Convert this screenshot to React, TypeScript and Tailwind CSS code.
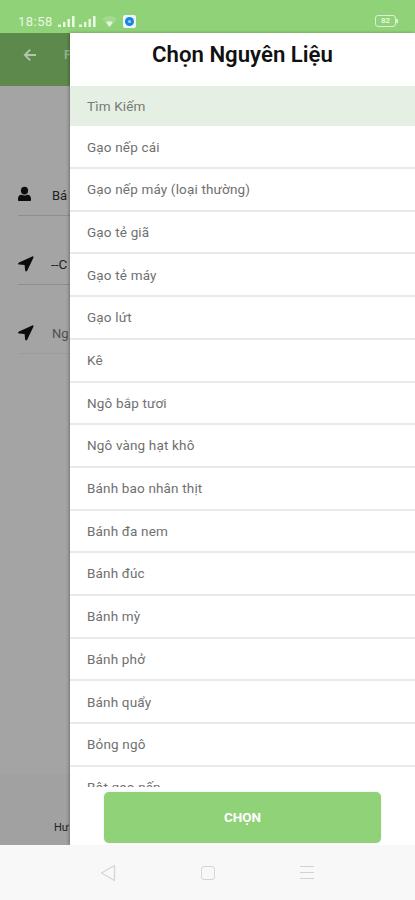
import React from "react";

const ingredients = [
  "Gạo nếp cái",
  "Gạo nếp máy (loại thường)",
  "Gạo tẻ giã",
  "Gạo tẻ máy",
  "Gạo lứt",
  "Kê",
  "Ngô bắp tươi",
  "Ngô vàng hạt khô",
  "Bánh bao nhân thịt",
  "Bánh đa nem",
  "Bánh đúc",
  "Bánh mỳ",
  "Bánh phở",
  "Bánh quẩy",
  "Bỏng ngô",
  "Bột gạo nếp",
];

const Signal = () => (
  <svg width="18" height="13" viewBox="0 0 18 13" fill="#e9f7e3">
    <rect x="0" y="9.5" width="3" height="2.5" />
    <rect x="5" y="7" width="2.4" height="5" />
    <rect x="9.5" y="4" width="2.4" height="8" />
    <rect x="14" y="1" width="2.6" height="11" />
  </svg>
);

const BackIcon = () => (
  <svg className="shrink-0" width="14" height="14" viewBox="0 0 14 14" fill="none" stroke="currentColor" strokeWidth="1.8">
    <path d="M13 7H2.200M7.200 1.600L1.800 7l5.400 5.400" />
  </svg>
);

const UserIcon = () => (
  <svg className="shrink-0 mt-[-3px] text-[#0c0c0c]" width="14" height="16" viewBox="0 0 14 16" fill="currentColor">
    <ellipse cx="6.500" cy="4.600" rx="3.600" ry="3.900" />
    <path d="M0 13c0-2.700 1.200-4 3.500-4.200 1.800 1 4.200 1 6 0C11.800 9 13 10.300 13 13v1c0 .7-.4 1-1.100 1H1.100C.4 15 0 14.700 0 14z" />
  </svg>
);

const SendIcon = () => (
  <svg className="shrink-0 text-[#0c0c0c]" width="16" height="16" viewBox="0 0 16 16" fill="currentColor">
    <path d="M14.300.4L1 6.500C-.3 7.200 0 8.500 1.300 8.600l5.300.4.500 5.300c.1 1.300 1.500 1.500 2.100.4l6.200-13C15.800.8 15.200 0 14.300.4z" />
  </svg>
);

const StatusBar = () => (
  <div className="h-[33px] shrink-0 bg-[#90d278] flex items-center pt-[10px] pl-[18px] pr-[17px] text-[#e9f7e3]">
    <span className="w-[40px] text-[13px] leading-none tracking-[0.5px]">
      18:58
    </span>
    <div className="flex gap-[3px] -mt-px">
      <Signal />
      <Signal />
    </div>
    <svg className="ml-[5px]" width="15" height="13" viewBox="0 0 15 13">
      <path d="M0 4a11 11 0 0 1 15 0L7.500 12z" fill="#a4da90" />
      <path d="M4.200 7.600a5 5 0 0 1 6.600 0L7.500 12z" fill="#e4f5dd" />
    </svg>
    <div className="ml-[6px] w-[13px] h-[13px] rounded-[2px] bg-[#edf6fc] flex items-center justify-center">
      <div className="w-[9px] h-[9px] rounded-full bg-[#1b83e2] flex items-center justify-center">
        <div className="w-[3px] h-[3px] rounded-full bg-[#9fd0f7]" />
      </div>
    </div>
    <div className="ml-auto flex items-center -mt-px">
      <div className="w-[21px] h-[12px] rounded-[3px] border border-[#d9f1d0] text-[8px] leading-[10px] font-bold text-center">
        82
      </div>
      <div className="w-[2px] h-[4px] bg-[#d9f1d0]" />
    </div>
  </div>
);

// Part of the form that stays visible, dimmed, beside the drawer
const DimmedPage = () => (
  <div className="w-[70px] shrink-0 flex flex-col whitespace-nowrap bg-[#a4a4a4] text-[#222] text-[13px]">
    <div className="h-[53px] shrink-0 bg-[#5d8a4c] flex items-center pl-[23px] pb-[10px] text-[#b5c8ae]">
      <BackIcon />
      <span className="ml-[27px] text-[12px] leading-[14px] font-bold text-[#96b38b]">F</span>
    </div>
    <div className="mt-[90px] ml-[18px] h-[40px] shrink-0 flex items-center border-b border-[#8e8e8e]">
      <UserIcon />
      <span className="ml-[20px] text-[13px]">Bá</span>
    </div>
    <div className="mt-[28px] ml-[18px] h-[41px] shrink-0 flex items-center border-b border-[#8e8e8e]">
      <SendIcon />
      <span className="ml-[17px] pt-px text-[13.5px]">--C</span>
    </div>
    <div className="mt-[28px] ml-[18px] h-[41px] shrink-0 flex items-center border-b border-[#9c9c9c]">
      <SendIcon />
      <span className="ml-[18px] pt-px text-[#505050]">Ng</span>
    </div>
    <div className="mt-auto h-[71px] shrink-0 bg-[#a1a1a1] pt-[46px] pl-[54px]">
      <span className="block text-[11px] leading-[16px]">Hư</span>
    </div>
  </div>
);

const Drawer = () => (
  <div className="flex-1 min-w-0 flex flex-col bg-white z-10 shadow-[-1px_0_3px_rgba(0,0,0,0.3)]">
    <h1 className="h-[53px] shrink-0 pt-[6px] text-center text-[22.2px] leading-[30px] font-semibold text-[#111]">
      Chọn Nguyên Liệu
    </h1>
    <div className="h-[40px] shrink-0 bg-[#e6efe4] pl-[17px] flex items-center text-[13.5px] tracking-[0.14px] text-[#767a75]">
      Tìm Kiếm
    </div>
    <ul className="h-[661px] shrink-0 overflow-hidden pt-[0.4px]">
      {ingredients.map((name) => (
        <li
          key={name}
          className="h-[42.7px] flex items-center border-b-2 border-[#e9e9e9] pl-[17px] text-[13.5px] tracking-[0.16px] text-[#707070]"
        >
          {name}
        </li>
      ))}
    </ul>
    <button className="mt-[5px] ml-[34px] w-[277px] h-[51px] shrink-0 rounded-[5px] bg-[#90d278] text-white text-[13.5px] font-bold shadow-[0_0_2px_rgba(0,0,0,0.12)]">
      CHỌN
    </button>
  </div>
);

const NavBar = () => (
  <div className="h-[55px] shrink-0 z-20 bg-[#f8f8f8] flex items-center pl-[100px] text-[#d6d6d6]">
    <svg width="16" height="18" viewBox="0 0 16 18" fill="none" stroke="currentColor" strokeWidth="1.300">
      <path d="M1.500 9L14.500 1.500v15z" strokeLinejoin="round" />
    </svg>
    <div className="ml-[85px] w-[14px] h-[14px] rounded-[3px] border-[1.5px] border-[#d6d6d6]" />
    <div className="ml-[85px] w-[14px] flex flex-col gap-[5px]">
      <div className="h-px bg-[#d2d2d2]" />
      <div className="h-px bg-[#d2d2d2]" />
      <div className="h-px bg-[#d2d2d2]" />
    </div>
  </div>
);

const App = () => {
  return (
    <div className="w-[415px] h-[900px] flex flex-col overflow-hidden bg-white font-['Roboto','Noto_Sans',sans-serif]">
      <StatusBar />
      <div className="h-[812px] shrink-0 flex">
        <DimmedPage />
        <Drawer />
      </div>
      <NavBar />
    </div>
  );
};

export default App;
